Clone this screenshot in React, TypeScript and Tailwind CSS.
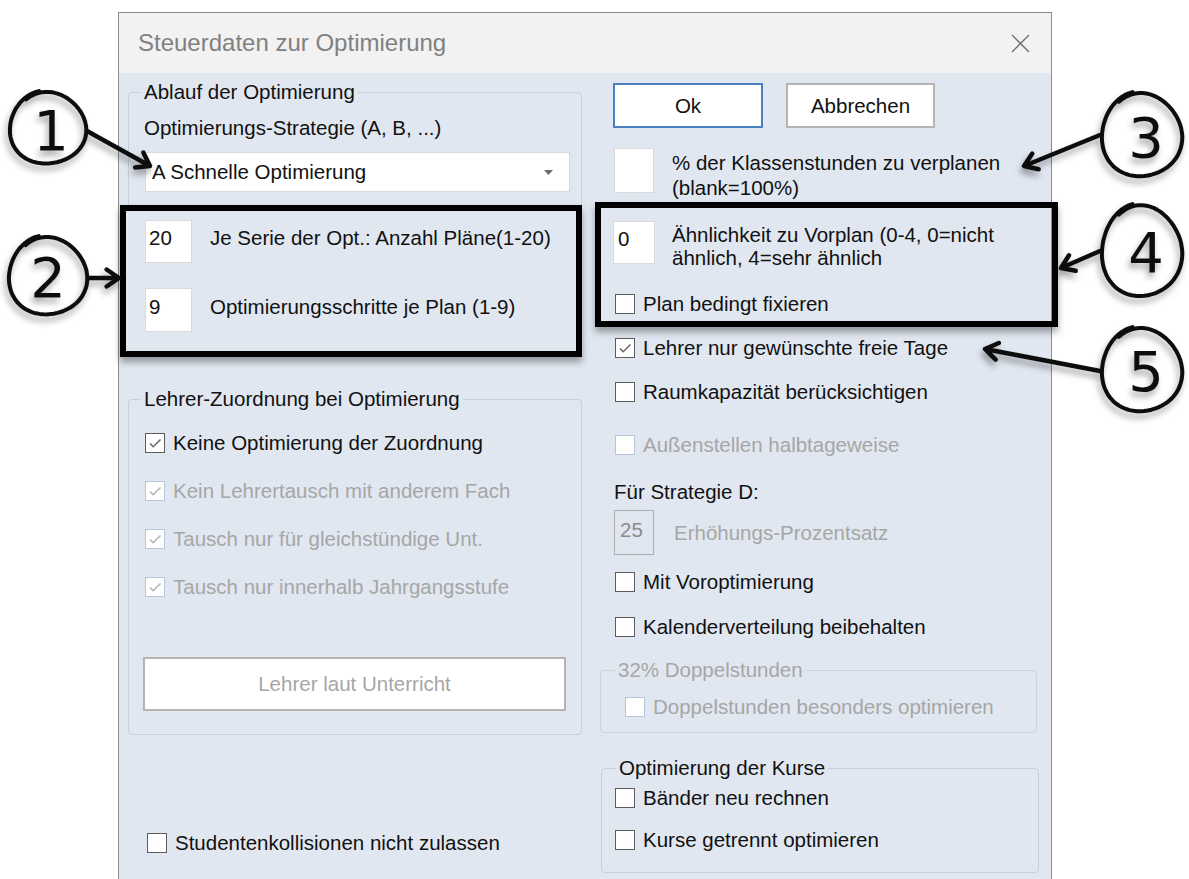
import React from "react";

// hand-drawn loop around the callout numbers
function loopPath(cx: number, cy: number, rx: number, ry: number) {
  const pts: string[] = [];
  const start = -1.8;
  const steps = 72;
  const sweep = Math.PI * 2 + 0.4;
  for (let i = 0; i <= steps; i++) {
    const t = start - (sweep * i) / steps;
    const k = 1 + 0.025 * Math.sin(t * 3 + 0.6) - 0.05 * (i / steps);
    const x = cx + rx * k * Math.cos(t);
    const y = cy + ry * k * Math.sin(t);
    pts.push(`${i ? "L" : "M"}${x.toFixed(1)} ${y.toFixed(1)}`);
  }
  return pts.join(" ");
}

function arrowPath(x1: number, y1: number, x2: number, y2: number) {
  const a = Math.atan2(y2 - y1, x2 - x1);
  const len = 15;
  const s = 0.6;
  const h1x = x2 - len * Math.cos(a - s);
  const h1y = y2 - len * Math.sin(a - s);
  const h2x = x2 - len * Math.cos(a + s);
  const h2y = y2 - len * Math.sin(a + s);
  return `M${x1} ${y1} L${x2} ${y2} M${h1x.toFixed(1)} ${h1y.toFixed(1)} L${x2} ${y2} L${h2x.toFixed(1)} ${h2y.toFixed(1)}`;
}

const CALLOUTS = [
  { n: "1", cx: 48, cy: 128, rx: 39, ry: 37, tx: 51, ty: 130, arrow: [87, 131, 150, 166] },
  { n: "2", cx: 48, cy: 276, rx: 40, ry: 40, tx: 48, ty: 277, arrow: [88, 278, 119, 278] },
  { n: "3", cx: 1142, cy: 135, rx: 41, ry: 43, tx: 1146, ty: 137, arrow: [1100, 135, 1024, 166] },
  { n: "4", cx: 1142, cy: 251, rx: 41, ry: 47, tx: 1146, ty: 252, arrow: [1100, 251, 1061, 268] },
  { n: "5", cx: 1142, cy: 370, rx: 41, ry: 43, tx: 1146, ty: 371, arrow: [1100, 371, 985, 349] },
];

function CheckBox({ checked = false, disabled = false }: { checked?: boolean; disabled?: boolean }) {
  return (
    <span
      className={
        disabled
          ? "flex h-5 w-5 shrink-0 items-center justify-center border border-[#b7c5da] bg-white"
          : "flex h-5 w-5 shrink-0 items-center justify-center border border-[#5c5c5c] bg-white"
      }
    >
      {checked && (
        <svg viewBox="0 0 18 18" width="18" height="18">
          <path
            d="M4 9.5l3.2 3.2L14.5 5.5"
            fill="none"
            stroke={disabled ? "#b4b4b4" : "#6a6a6a"}
            strokeWidth="1.6"
          />
        </svg>
      )}
    </span>
  );
}

function CheckRow({
  label,
  checked,
  disabled,
  className = "",
}: {
  label: string;
  checked?: boolean;
  disabled?: boolean;
  className?: string;
}) {
  return (
    <div className={`flex h-6 items-center gap-2 ${className}`}>
      <CheckBox checked={checked} disabled={disabled} />
      <span className={disabled ? "text-[#a6a6a6]" : ""}>{label}</span>
    </div>
  );
}

export default function App() {
  return (
    <div className="relative h-[879px] w-[1189px] overflow-hidden bg-white font-['Liberation_Sans',Arial,sans-serif] text-[20.5px] leading-6 text-[#111]">
      {/* dialog window */}
      <div className="ml-[118px] mt-[12px] h-[880px] w-[934px] border border-[#8c8c8c] bg-[#e1e7f0]">
        <div className="flex h-[60px] items-center justify-between bg-[#f2f2f2] pl-[19px] pr-[21px]">
          <span className="text-[24px] text-[#808080]">Steuerdaten zur Optimierung</span>
          <svg width="19" height="19" viewBox="0 0 19 19">
            <path d="M1 1L18 18M18 1L1 18" stroke="#707070" strokeWidth="1.4" />
          </svg>
        </div>

        <div className="flex">
          {/* left column */}
          <div className="w-[476px] pl-[9px]">
            <fieldset className="mt-[7px] w-[454px] rounded-[4px] border border-[#c8cfd9]">
              <legend className="ml-[12px] px-[3px]">Ablauf der Optimierung</legend>
              <div className="pb-[15px] pl-[15px]">
                <div className="mt-[12px]">Optimierungs-Strategie (A, B, ...)</div>
                <div className="ml-px mt-[12px] flex h-[40px] w-[425px] items-center justify-between border border-[#d9d9d9] bg-white pl-[6px] pr-[16px]">
                  <span>A Schnelle Optimierung</span>
                  <svg width="9" height="5" viewBox="0 0 9 5">
                    <path d="M0 0h9L4.5 5z" fill="#6b6b6b" />
                  </svg>
                </div>
              </div>
            </fieldset>

            <div className="mt-[12px] flex items-start pl-[17px]">
              <div className="h-[43px] w-[47px] border border-[#dadada] bg-white pl-[3px] pt-[5px]">20</div>
              <span className="ml-[18px] mt-[6px]">Je Serie der Opt.: Anzahl Pläne(1-20)</span>
            </div>
            <div className="mt-[25px] flex items-start pl-[17px]">
              <div className="h-[44px] w-[47px] border border-[#dadada] bg-white pl-[3px] pt-[6px]">9</div>
              <span className="ml-[18px] mt-[7px]">Optimierungsschritte je Plan (1-9)</span>
            </div>

            <fieldset className="mt-[55px] w-[454px] rounded-[4px] border border-[#c8cfd9]">
              <legend className="ml-[12px] px-[3px]">Lehrer-Zuordnung bei Optimierung</legend>
              <div className="pb-[23px] pl-[14px]">
                <CheckRow className="mt-[20px] pl-[2px]" label="Keine Optimierung der Zuordnung" checked />
                <CheckRow className="mt-[24px] pl-[2px]" label="Kein Lehrertausch mit anderem Fach" checked disabled />
                <CheckRow className="mt-[24px] pl-[2px]" label="Tausch nur für gleichstündige Unt." checked disabled />
                <CheckRow className="mt-[24px] pl-[2px]" label="Tausch nur innerhalb Jahrgangsstufe" checked disabled />
                <div className="mt-[58px] flex h-[54px] w-[423px] items-center justify-center border-2 border-[#b4b4b4] bg-white text-[#a6a6a6]">
                  Lehrer laut Unterricht
                </div>
              </div>
            </fieldset>

            <CheckRow className="mt-[96px] pl-[19px]" label="Studentenkollisionen nicht zulassen" />
          </div>

          {/* right column */}
          <div className="flex-1">
            <div className="mt-[10px] flex gap-[23px] pl-[18px]">
              <div className="flex h-[45px] w-[150px] items-center justify-center border-2 border-[#4a80c0] bg-white">Ok</div>
              <div className="flex h-[45px] w-[149px] items-center justify-center border-2 border-[#b4b4b4] bg-white">Abbrechen</div>
            </div>

            <div className="mt-[20px] flex h-[45px] items-start pl-[19px]">
              <div className="h-[45px] w-[40px] shrink-0 border border-[#dadada] bg-white" />
              <span className="ml-[18px] mt-[2px] leading-[25px]">
                % der Klassenstunden zu verplanen
                <br />
                (blank=100%)
              </span>
            </div>

            <div className="mt-[28px] flex h-[43px] items-start pl-[18px]">
              <div className="h-[43px] w-[42px] shrink-0 border border-[#dadada] bg-white pl-[4px] pt-[5px]">0</div>
              <span className="ml-[17px] mt-[2px] leading-[23px]">
                Ähnlichkeit zu Vorplan (0-4, 0=nicht
                <br />
                ähnlich, 4=sehr ähnlich
              </span>
            </div>

            <CheckRow className="mt-[28px] pl-[20px]" label="Plan bedingt fixieren" />
            <CheckRow className="mt-[20px] pl-[20px]" label="Lehrer nur gewünschte freie Tage" checked />
            <CheckRow className="mt-[20px] pl-[20px]" label="Raumkapazität berücksichtigen" />
            <CheckRow className="mt-[29px] pl-[20px]" label="Außenstellen halbtageweise" disabled />

            <div className="mt-[23px] pl-[19px]">Für Strategie D:</div>
            <div className="mt-[6px] flex items-start pl-[19px]">
              <div className="h-[45px] w-[40px] shrink-0 border border-[#adadad] pl-[5px] pt-[7px] text-[#8c8c8c]">25</div>
              <span className="ml-[20px] mt-[11px] text-[#a6a6a6]">Erhöhungs-Prozentsatz</span>
            </div>

            <CheckRow className="mt-[15px] pl-[20px]" label="Mit Voroptimierung" />
            <CheckRow className="mt-[21px] pl-[20px]" label="Kalenderverteilung beibehalten" />

            <fieldset className="ml-[5px] mt-[19px] w-[437px] rounded-[4px] border border-[#ccd3dc]">
              <legend className="ml-[14px] px-[3px] text-[#a6a6a6]">32% Doppelstunden</legend>
              <div className="pb-[13px] pl-[24px]">
                <CheckRow className="mt-[13px]" label="Doppelstunden besonders optimieren" disabled />
              </div>
            </fieldset>

            <fieldset className="ml-[6px] mt-[23px] w-[438px] rounded-[4px] border border-[#c8cfd9]">
              <legend className="ml-[14px] px-[3px]">Optimierung der Kurse</legend>
              <div className="pb-[20px] pl-[13px]">
                <CheckRow className="mt-[6px]" label="Bänder neu rechnen" />
                <CheckRow className="mt-[18px]" label="Kurse getrennt optimieren" />
              </div>
            </fieldset>
          </div>
        </div>
      </div>

      {/* highlight frames */}
      <div className="absolute left-[120px] top-[205px] h-[152px] w-[462px] border-[6px] border-black shadow-[0_5px_7px_rgba(0,0,0,0.35)]" />
      <div className="absolute left-[595px] top-[202px] h-[125px] w-[463px] border-[6px] border-black shadow-[0_5px_7px_rgba(0,0,0,0.35)]" />

      {/* numbered callouts */}
      <svg className="pointer-events-none absolute inset-0" width="1189" height="879" viewBox="0 0 1189 879">
        <defs>
          <filter id="callout-shadow" x="-30%" y="-30%" width="160%" height="170%">
            <feDropShadow dx="-2" dy="5" stdDeviation="3" floodColor="#000" floodOpacity="0.35" />
          </filter>
        </defs>
        <g filter="url(#callout-shadow)">
          {CALLOUTS.map((c) => (
            <g key={c.n}>
              <path
                d={loopPath(c.cx, c.cy, c.rx, c.ry)}
                fill="none"
                stroke="#111"
                strokeWidth="4"
                strokeLinecap="round"
                strokeLinejoin="round"
              />
              <path
                d={arrowPath(c.arrow[0], c.arrow[1], c.arrow[2], c.arrow[3])}
                fill="none"
                stroke="#111"
                strokeWidth="4.5"
                strokeLinecap="round"
                strokeLinejoin="round"
              />
              <text
                x={c.tx}
                y={c.ty}
                textAnchor="middle"
                dominantBaseline="central"
                fontFamily="'DejaVu Sans', sans-serif"
                fontSize="56"
                fill="#111"
              >
                {c.n}
              </text>
            </g>
          ))}
        </g>
      </svg>
    </div>
  );
}
